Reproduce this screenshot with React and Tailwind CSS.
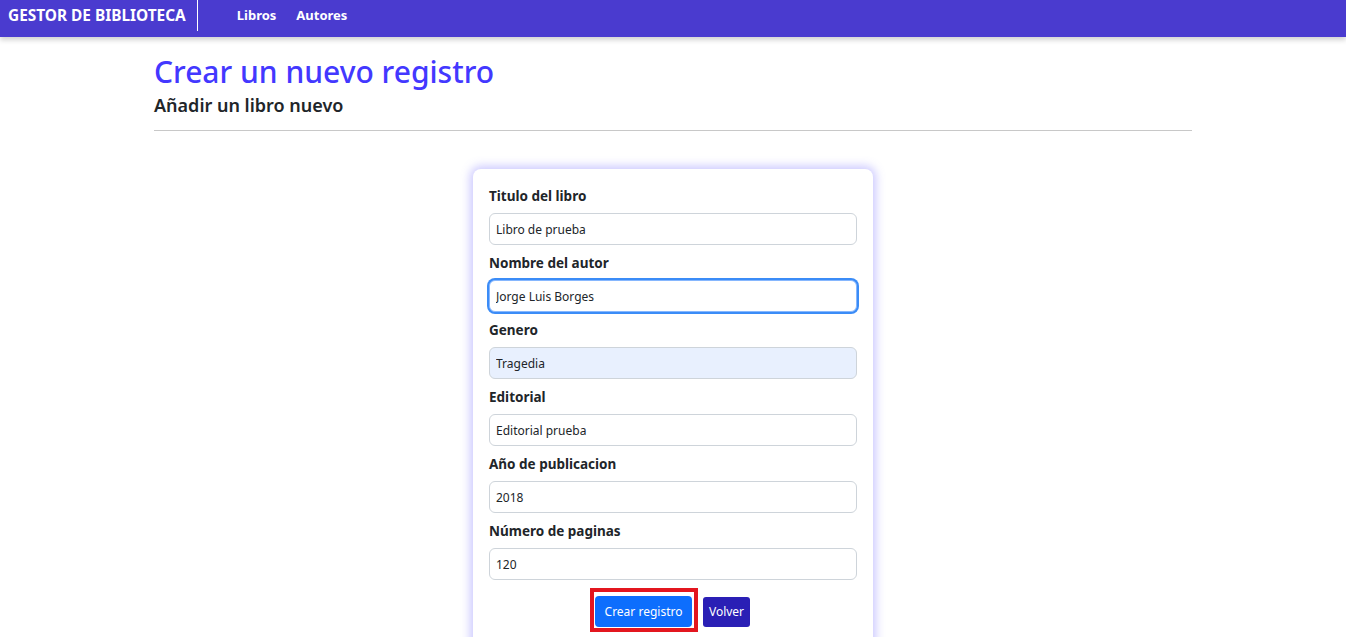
import React, { useState } from "react";

const campos = [
  { id: "titulo", label: "Titulo del libro", valor: "Libro de prueba" },
  { id: "autor", label: "Nombre del autor", valor: "Jorge Luis Borges", foco: true },
  { id: "genero", label: "Genero", valor: "Tragedia", auto: true },
  { id: "editorial", label: "Editorial", valor: "Editorial prueba" },
  { id: "anio", label: "Año de publicacion", valor: "2018" },
  { id: "paginas", label: "Número de paginas", valor: "120" },
];

const Navbar = () => (
  <nav className="h-[37px] bg-[#4a3bcf] flex items-start shadow-[0_3px_5px_rgba(0,0,0,0.18)] relative z-10">
    <div className="h-[31px] flex items-center pl-2 pr-[11px] border-r border-white">
      <span className="text-white font-bold text-[15.4px]">GESTOR DE BIBLIOTECA</span>
    </div>
    <div className="h-[31px] flex items-center gap-[20px] pl-[39px]">
      <a className="text-white font-bold text-[13px]">Libros</a>
      <a className="text-white font-bold text-[13px]">Autores</a>
    </div>
  </nav>
);

export default function App() {
  const [valores, setValores] = useState(
    Object.fromEntries(campos.map((c) => [c.id, c.valor]))
  );

  return (
    <div className="min-h-screen bg-white font-['Noto_Sans',sans-serif] text-[#212529] overflow-hidden h-[637px]">
      <Navbar />

      <div className="w-[1038px] mx-auto">
        <h1 className="text-[#4338ff] text-[30px] leading-[36px] font-medium mt-[17px]">Crear un nuevo registro</h1>
        <h2 className="text-[18px] leading-[24px] font-semibold mt-[3px]">Añadir un libro nuevo</h2>
        <hr className="border-0 h-px bg-[#c8c8c8] mt-[13px]" />

        <div className="flex justify-center mt-[38px]">
          <form className="w-[400px] bg-white rounded-[8px] shadow-[0_0_10px_3px_rgba(110,100,255,0.35)] px-4 pt-[17px] pb-6">
            {campos.map((c) => (
              <div key={c.id} className="mb-[8px]">
                <label className="block font-bold text-[13.5px] leading-[21px] mb-[6px]">{c.label}</label>
                <input
                  value={valores[c.id]}
                  onChange={(e) => setValores({ ...valores, [c.id]: e.target.value })}
                  className={`w-full h-[32px] rounded-[6px] px-[6px] text-[12px] text-[#212529] outline-none border ${
                    c.foco
                      ? "border-[#86b7fe] ring-2 ring-[#3b8cf7]"
                      : "border-[#ced4da]"
                  } ${c.auto ? "bg-[#e8f0fe]" : "bg-white"}`}
                />
              </div>
            ))}

            <div className="flex justify-center items-start mt-[3px] pr-[6px]">
              <div className="border-[4px] border-[#e3161f] pt-[4px] pb-[1px] pl-[1px] pr-[2px]">
                <button type="button" className="block w-[97px] bg-[#0d6efd] text-white text-[12px] h-[31px] rounded-[4px]">
                  Crear registro
                </button>
              </div>
              <button type="button" className="bg-[#2a1fb5] text-white text-[12px] h-[30px] w-[47px] rounded-[3px] mt-[9px] ml-[5px]">
                Volver
              </button>
            </div>
          </form>
        </div>
      </div>
    </div>
  );
}
